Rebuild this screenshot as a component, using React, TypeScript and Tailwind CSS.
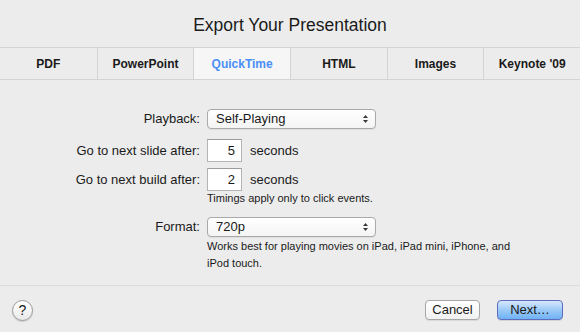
import React from "react";

const tabs = ["PDF", "PowerPoint", "QuickTime", "HTML", "Images", "Keynote '09"];

function Arrows() {
  return (
    <svg width="7" height="10" viewBox="0 0 7 10" className="block">
      <path d="M3.5 1 L6 4 L1 4 Z" fill="#3a3a3a" />
      <path d="M3.5 9 L6 6 L1 6 Z" fill="#3a3a3a" />
    </svg>
  );
}

function Select({ value }: { value: string }) {
  return (
    <div className="flex h-[20px] w-[169px] items-center justify-between rounded-[4px] border border-[#a9a9a9] bg-gradient-to-b from-white to-[#f4f4f4] pl-[8px] pr-[6px] text-[13px] shadow-[0_1px_0_rgba(0,0,0,0.06)]">
      <span>{value}</span>
      <Arrows />
    </div>
  );
}

function NumField({ value }: { value: string }) {
  return (
    <div className="flex h-[23px] w-[35px] items-center justify-end border border-[#b4b4b4] border-t-[#9c9c9c] bg-white pr-[6px] text-[13px]">
      {value}
    </div>
  );
}

export default function App() {
  return (
    <div
      className="flex h-[332px] w-[580px] flex-col bg-[#ececec] text-[#1a1a1a]"
      style={{ fontFamily: '"Liberation Sans", Arial, sans-serif' }}
    >
      <div className="flex h-[47px] items-center justify-center pt-[3px] text-[17.5px]">
        Export Your Presentation
      </div>

      <div className="grid h-[33px] grid-cols-6 border-y border-[#d4d4d4]">
        {tabs.map((t, i) => (
          <div
            key={t}
            className={
              "flex items-center justify-center text-[12px] font-bold " +
              (i > 0 ? "border-l border-[#d4d4d4] " : "") +
              (t === "QuickTime" ? "bg-[#f6f6f6] text-[#4a8ff5]" : "")
            }
          >
            {t}
          </div>
        ))}
      </div>

      <div className="flex-1 pt-[29px] text-[13px]">
        <div className="grid grid-cols-[200px_1fr] items-center gap-x-[7px]">
          <div className="text-right">Playback:</div>
          <Select value="Self-Playing" />

          <div className="mt-[10px] text-right">Go to next slide after:</div>
          <div className="mt-[10px] flex items-center gap-[8px]">
            <NumField value="5" />
            <span>seconds</span>
          </div>

          <div className="mt-[6px] text-right">Go to next build after:</div>
          <div className="mt-[6px] flex items-center gap-[8px]">
            <NumField value="2" />
            <span>seconds</span>
          </div>

          <div />
          <div className="h-[14px] text-[11px] leading-[14px]">Timings apply only to click events.</div>

          <div className="mt-[12px] text-right">Format:</div>
          <div className="mt-[12px]">
            <Select value="720p" />
          </div>

          <div />
          <div className="mt-[1px] w-[320px] text-[11px] leading-[17px]">
            Works best for playing movies on iPad, iPad mini, iPhone, and iPod touch.
          </div>
        </div>
      </div>

      <div className="flex h-[47px] items-center border-t border-[#dcdcdc] pl-[12px] pr-[17px] pt-[2px]">
        <div className="flex h-[21px] w-[21px] items-center justify-center rounded-full border border-[#9a9a9a] bg-gradient-to-b from-white to-[#e9e9e9] text-[14px] shadow-[0_1px_1px_rgba(0,0,0,0.15)]">
          ?
        </div>
        <div className="ml-auto flex items-center gap-[17px] text-[13px]">
          <div className="flex h-[20px] w-[55px] items-center justify-center rounded-[4px] border border-[#a6a6a6] bg-gradient-to-b from-white to-[#f1f1f1] shadow-[0_1px_0_rgba(0,0,0,0.08)]">
            Cancel
          </div>
          <div className="flex h-[20px] w-[66px] items-center justify-center rounded-[4px] border border-[#5f6bbd] bg-gradient-to-b from-[#d6e8fc] via-[#9ccaf7] to-[#6eb2f4] shadow-[0_1px_0_rgba(0,0,0,0.1)]">
            Next…
          </div>
        </div>
      </div>
    </div>
  );
}
